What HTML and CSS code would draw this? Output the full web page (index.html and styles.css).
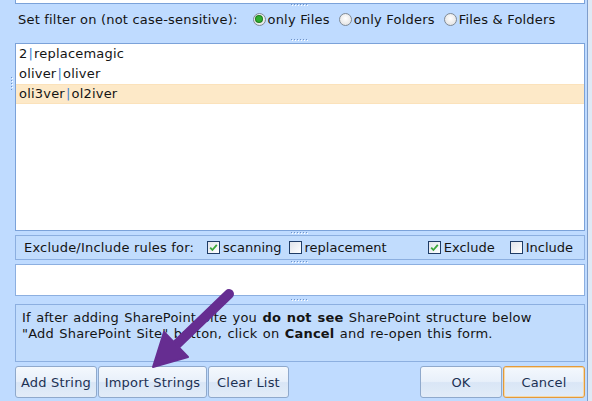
FILE: index.html
```html
<!DOCTYPE html>
<html>
<head>
<meta charset="utf-8">
<link rel="stylesheet" href="styles.css">
</head>
<body>
<div class="frame">
  <div class="top-box"></div>

  <div class="filter-band">
    <div class="split"><span class="grip"></span></div>
    <div class="filter-row">
      <span class="filter-label">Set filter on (not case-sensitive):</span>
      <span class="opt"><span class="radio checked"></span>only Files</span>
      <span class="opt"><span class="radio"></span>only Folders</span>
      <span class="opt"><span class="radio"></span>Files &amp; Folders</span>
    </div>
    <div class="split split-bottom"><span class="grip"></span></div>
  </div>

  <div class="list-wrap">
    <span class="vgrip"></span>
    <ul class="list">
      <li>2<span class="pipe">|</span>replacemagic</li>
      <li>oliver<span class="pipe">|</span>oliver</li>
      <li class="selected">oli3ver<span class="pipe">|</span>ol2iver</li>
    </ul>
  </div>

  <div class="gap"><span class="grip"></span></div>

  <div class="panel rules">
    <span class="rules-label">Exclude/Include rules for:</span>
    <span class="chk-opt"><span class="checkbox checked"><svg viewBox="0 0 11 11" width="11" height="11"><path d="M2.2 5.6 L4.4 8 L8.8 2.8" fill="none" stroke="#3aa63a" stroke-width="1.8"/></svg></span>scanning</span>
    <span class="chk-opt"><span class="checkbox"></span>replacement</span>
    <span class="chk-opt push"><span class="checkbox checked"><svg viewBox="0 0 11 11" width="11" height="11"><path d="M2.2 5.6 L4.4 8 L8.8 2.8" fill="none" stroke="#3aa63a" stroke-width="1.8"/></svg></span>Exclude</span>
    <span class="chk-opt last"><span class="checkbox"></span>Include</span>
  </div>

  <div class="gap"><span class="grip"></span></div>

  <div class="white-box"></div>

  <div class="gap gap-tall"><span class="grip"></span></div>

  <div class="panel info">
    <p>If after adding SharePoint Site you <b>do not see</b> SharePoint structure below<br>"Add SharePoint Site" button, click on <b>Cancel</b> and re-open this form.</p>
  </div>

  <div class="gap"></div>

  <div class="buttons">
    <button class="btn w-add">Add String</button>
    <button class="btn w-import">Import Strings</button>
    <button class="btn w-clear">Clear List</button>
    <button class="btn w-ok push">OK</button>
    <button class="btn w-cancel focused">Cancel</button>
  </div>
</div>

<svg class="arrow" width="592" height="401" viewBox="0 0 592 401">
  <line x1="229" y1="294" x2="176" y2="345" stroke="#662d91" stroke-width="10" stroke-linecap="round"/>
  <polygon points="153,367 164,332 188,357" fill="#662d91" stroke="#662d91" stroke-width="2" stroke-linejoin="round"/>
</svg>
</body>
</html>
```

FILE: styles.css
```css
html, body {
  margin: 0;
  padding: 0;
  height: 401px;
  overflow: hidden;
  background: #dfe9f5;
}

body {
  font-family: "DejaVu Sans", Verdana, sans-serif;
  font-size: 13px;
  letter-spacing: 0.2px;
  color: #141414;
  position: relative;
}

.frame {
  width: 588px;
  height: 401px;
  box-sizing: border-box;
  background: #bfdbff;
  border-right: 1px solid #7e9dcb;
  padding: 0 2px 0 15px;
  display: flex;
  flex-direction: column;
}

.top-box {
  height: 4px;
  box-sizing: border-box;
  background: #fff;
  border: 1px solid #7ba2d9;
  border-top: none;
}

.filter-band {
  height: 39px;
  display: flex;
  flex-direction: column;
}

.split {
  height: 2px;
  display: flex;
  justify-content: center;
}

.split-bottom {
  margin-top: auto;
  margin-bottom: 2px;
}

.grip {
  display: block;
  width: 18px;
  height: 2px;
  background-image:
    linear-gradient(90deg, #6f93c9 1px, transparent 1px),
    linear-gradient(90deg, transparent 1px, #ffffff 1px, #ffffff 2px, transparent 2px);
  background-size: 3px 1px, 3px 1px;
  background-position: 0 0, 0 1px;
  background-repeat: repeat-x;
}

.filter-row {
  height: 26px;
  display: flex;
  align-items: center;
  padding-left: 3px;
}

.filter-label {
  margin-right: 15px;
}

.opt {
  display: inline-flex;
  align-items: center;
  margin-right: 9px;
}

.radio {
  width: 13px;
  height: 13px;
  box-sizing: border-box;
  border-radius: 50%;
  border: 1px solid #7f8a96;
  background: radial-gradient(circle at 50% 40%, #ffffff, #dcdcdc);
  margin-right: 2px;
  display: inline-flex;
  align-items: center;
  justify-content: center;
}

.radio.checked::after {
  content: "";
  width: 6px;
  height: 6px;
  border-radius: 50%;
  background: #2fae2f;
  box-shadow: 0 0 0 1px #1d7a1d;
}

.list-wrap {
  position: relative;
  height: 188px;
}

.vgrip {
  position: absolute;
  left: -4px;
  top: 34px;
  width: 2px;
  height: 13px;
  background-image:
    linear-gradient(180deg, #6f93c9 1px, transparent 1px),
    linear-gradient(180deg, transparent 1px, #ffffff 1px, #ffffff 2px, transparent 2px);
  background-size: 1px 3px, 1px 3px;
  background-position: 0 0, 1px 0;
  background-repeat: repeat-y;
}

.list {
  list-style: none;
  margin: 0;
  padding: 0;
  height: 100%;
  box-sizing: border-box;
  background: #fff;
  border: 1px solid #7ba2d9;
}

.list li {
  height: 20px;
  line-height: 20px;
  padding-left: 3px;
}

.list li.selected {
  background: #fde9c8;
  box-shadow: inset 0 1px 0 #fbe2bb, inset 0 -1px 0 #fbe2bb;
}

.pipe {
  color: #3d7fd0;
  margin: 0 1px;
}

.gap {
  height: 4px;
  display: flex;
  justify-content: center;
  align-items: center;
}

.gap-tall {
  height: 8px;
}

.panel {
  box-sizing: border-box;
  border: 1px solid #8cafe0;
  background: #c1dcfd;
}

.rules {
  height: 25px;
  display: flex;
  align-items: center;
  padding: 0 11px 0 8px;
}

.rules-label {
  margin-right: 13px;
}

.chk-opt {
  display: inline-flex;
  align-items: center;
  margin-right: 7px;
  letter-spacing: 0;
}

.chk-opt.push {
  margin-left: auto;
  margin-right: 15px;
}

.chk-opt.last {
  margin-right: 0;
}

.checkbox {
  width: 13px;
  height: 13px;
  box-sizing: border-box;
  border: 1px solid #1f3c66;
  background: linear-gradient(135deg, #dfe3ea, #ffffff);
  margin-right: 3px;
  display: inline-flex;
  align-items: center;
  justify-content: center;
}

.white-box {
  height: 32px;
  box-sizing: border-box;
  background: #fff;
  border: 1px solid #8cafe0;
}

.info {
  height: 58px;
  padding: 5px 6px 0 6px;
}

.info p {
  margin: 0;
  line-height: 16px;
  word-spacing: 1px;
}

.info b {
  font-weight: bold;
}

.buttons {
  height: 32px;
  display: flex;
  gap: 1px;
}

.btn {
  height: 32px;
  box-sizing: border-box;
  border: 1px solid #8fa9cc;
  border-radius: 3px;
  background: linear-gradient(180deg, #f4f8fd 0%, #e8f0fa 48%, #d9e6f6 52%, #e2ecf8 100%);
  font-family: "DejaVu Sans", Verdana, sans-serif;
  font-size: 13px;
  letter-spacing: 0.2px;
  color: #1c3153;
  padding: 0;
}

.btn.push {
  margin-left: auto;
}

.w-add { width: 82px; }
.w-import { width: 109px; }
.w-clear { width: 81px; }
.w-ok { width: 82px; }
.w-cancel { width: 82px; }

.btn.focused {
  border-color: #e39a3c;
  box-shadow: inset 0 0 0 1px #f5d9a8;
}

.arrow {
  position: absolute;
  left: 0;
  top: 0;
  pointer-events: none;
}
```
